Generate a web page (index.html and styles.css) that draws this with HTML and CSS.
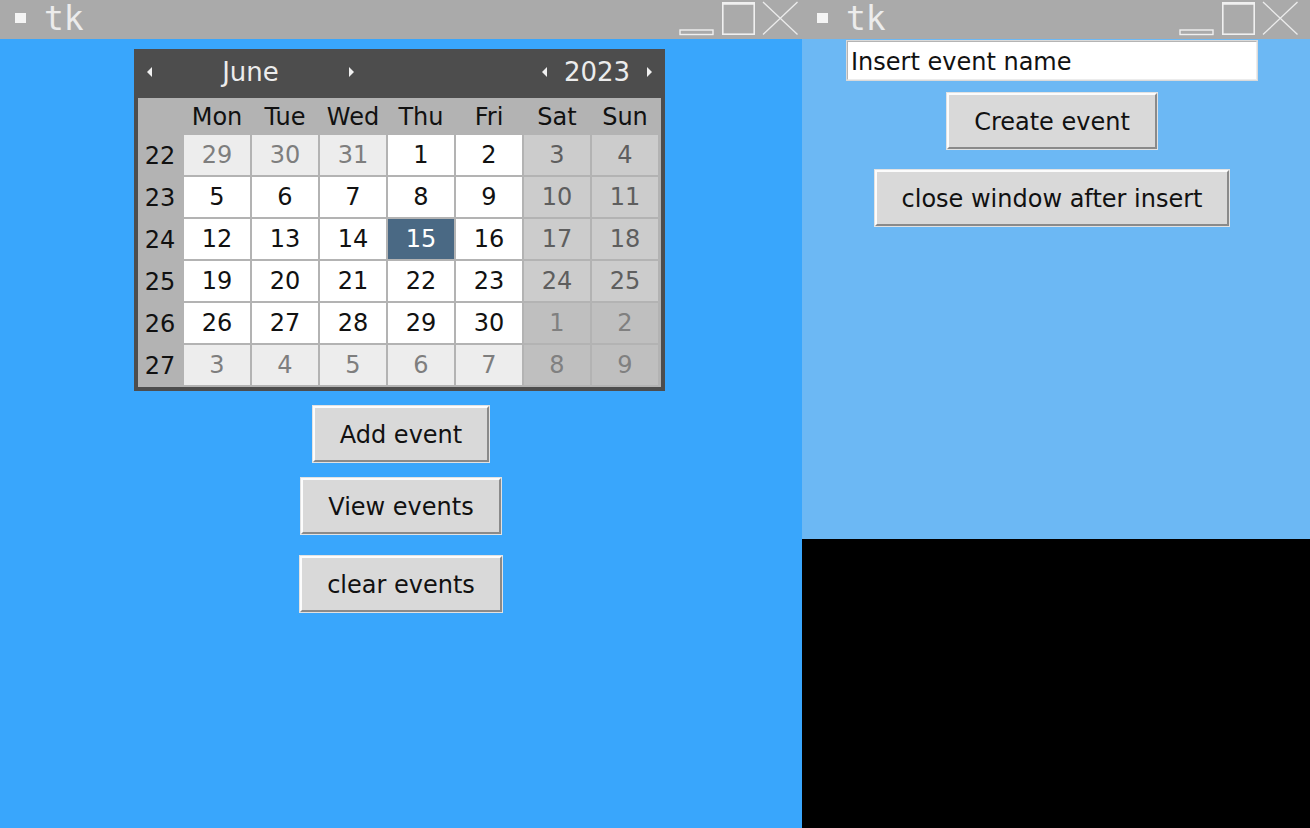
FILE: index.html
```html
<!DOCTYPE html>
<html>
<head>
<meta charset="utf-8">
<title>tk</title>
<link rel="stylesheet" href="styles.css">
</head>
<body>
<div class="screen">
  <div class="win win-main">
    <div class="titlebar">
      <span class="ticon"></span><span class="ttext">tk</span>
      <svg class="controls" width="120" height="39" viewBox="0 0 120 39">
        <rect x="1" y="30" width="33" height="4.5" fill="none" stroke="#f0f0f0" stroke-width="1.4"/>
        <rect x="43.8" y="2.8" width="31.4" height="31.4" fill="none" stroke="#f0f0f0" stroke-width="1.6"/>
        <line x1="43" y1="3.6" x2="76" y2="3.6" stroke="#f0f0f0" stroke-width="2.4"/>
        <line x1="84" y1="2" x2="118.5" y2="34.5" stroke="#ececec" stroke-width="1.3"/>
        <line x1="118.5" y1="2" x2="84" y2="34.5" stroke="#ececec" stroke-width="1.3"/>
      </svg>
    </div>
    <div class="content content-main">
      <div class="cal">
        <div class="cal-head">
          <span class="pad-l"></span>
          <span class="arr arr-l"></span>
          <span class="hlabel month">June</span>
          <span class="arr arr-r"></span>
          <span class="hspace"></span>
          <span class="arr arr-l"></span>
          <span class="hlabel year">2023</span>
          <span class="arr arr-r"></span>
          <span class="pad-r"></span>
        </div>
        <div class="cal-grid">
          <div class="corner"></div>
          <div class="dh">Mon</div><div class="dh">Tue</div><div class="dh">Wed</div><div class="dh">Thu</div><div class="dh">Fri</div><div class="dh">Sat</div><div class="dh">Sun</div>

          <div class="wk">22</div>
          <div class="d om">29</div><div class="d om">30</div><div class="d om">31</div><div class="d">1</div><div class="d">2</div><div class="d we">3</div><div class="d we">4</div>

          <div class="wk">23</div>
          <div class="d">5</div><div class="d">6</div><div class="d">7</div><div class="d">8</div><div class="d">9</div><div class="d we">10</div><div class="d we">11</div>

          <div class="wk">24</div>
          <div class="d">12</div><div class="d">13</div><div class="d">14</div><div class="d sel">15</div><div class="d">16</div><div class="d we">17</div><div class="d we">18</div>

          <div class="wk">25</div>
          <div class="d">19</div><div class="d">20</div><div class="d">21</div><div class="d">22</div><div class="d">23</div><div class="d we">24</div><div class="d we">25</div>

          <div class="wk">26</div>
          <div class="d">26</div><div class="d">27</div><div class="d">28</div><div class="d">29</div><div class="d">30</div><div class="d owe">1</div><div class="d owe">2</div>

          <div class="wk">27</div>
          <div class="d om">3</div><div class="d om">4</div><div class="d om">5</div><div class="d om">6</div><div class="d om">7</div><div class="d owe">8</div><div class="d owe">9</div>
        </div>
      </div>
      <button class="btn btn-add">Add event</button>
      <button class="btn btn-view">View events</button>
      <button class="btn btn-clear">clear events</button>
    </div>
  </div>

  <div class="win win-dialog">
    <div class="titlebar">
      <span class="ticon"></span><span class="ttext">tk</span>
      <svg class="controls" width="120" height="39" viewBox="0 0 120 39">
        <rect x="1" y="30" width="33" height="4.5" fill="none" stroke="#f0f0f0" stroke-width="1.4"/>
        <rect x="43.8" y="2.8" width="31.4" height="31.4" fill="none" stroke="#f0f0f0" stroke-width="1.6"/>
        <line x1="43" y1="3.6" x2="76" y2="3.6" stroke="#f0f0f0" stroke-width="2.4"/>
        <line x1="84" y1="2" x2="118.5" y2="34.5" stroke="#ececec" stroke-width="1.3"/>
        <line x1="118.5" y1="2" x2="84" y2="34.5" stroke="#ececec" stroke-width="1.3"/>
      </svg>
    </div>
    <div class="content content-dlg">
      <div class="entry">Insert event name</div>
      <button class="btn btn-create">Create event</button>
      <button class="btn btn-close">close window after insert</button>
    </div>
  </div>
  <div class="win win-edge">
    <div class="titlebar edge-bar"></div>
    <div class="content edge-content"></div>
  </div>
</div>
</body>
</html>
```

FILE: styles.css
```css
* {
  box-sizing: border-box;
}

html, body {
  margin: 0;
  padding: 0;
}

body {
  width: 1310px;
  height: 828px;
  overflow: hidden;
  background: #000000;
  font-family: "DejaVu Sans", "Liberation Sans", sans-serif;
}

.screen {
  display: flex;
  align-items: flex-start;
  width: 1310px;
  height: 828px;
}

.win {
  display: flex;
  flex-direction: column;
  flex-shrink: 0;
}

.win-main {
  width: 802px;
  height: 828px;
}

.win-dialog {
  width: 500px;
  height: 539px;
}

.win-edge {
  width: 8px;
  height: 539px;
}

.titlebar {
  height: 39px;
  flex-shrink: 0;
  background: #aaaaaa;
  display: flex;
  align-items: flex-start;
}

.ticon {
  width: 11px;
  height: 10px;
  margin: 13px 0 0 15px;
  background: #f4f4f4;
}

.ttext {
  margin-left: 18px;
  font-family: "DejaVu Sans Mono", monospace;
  font-size: 33px;
  line-height: 38px;
  color: #ececec;
}

.controls {
  margin-left: auto;
  margin-right: 3px;
  display: block;
}

.content {
  flex: 1;
  display: flex;
  flex-direction: column;
  align-items: center;
}

.content-main {
  background: #39a6fc;
  padding-top: 10px;
}

.content-dlg {
  background: #6cb8f4;
  padding-top: 2px;
}

.edge-content {
  background: #6cb8f4;
}

/* Calendar */
.cal {
  width: 531px;
  padding: 4px;
  margin-right: 3px;
  background: #4d4d4d;
}

.cal-head {
  height: 45px;
  padding-bottom: 7px;
  display: flex;
  align-items: center;
  color: #ececec;
}

.pad-l,
.pad-r {
  width: 8px;
  flex-shrink: 0;
}

.hspace {
  flex: 1;
}

.arr-l {
  flex-shrink: 0;
  width: 6px;
  height: 0;
  border-right: 5px solid #f0f0f0;
  border-top: 5px solid transparent;
  border-bottom: 5px solid transparent;
  border-left: 1px solid transparent;
}

.arr-r {
  flex-shrink: 0;
  width: 6px;
  height: 0;
  border-left: 5px solid #f0f0f0;
  border-top: 5px solid transparent;
  border-bottom: 5px solid transparent;
  border-right: 1px solid transparent;
}

.hlabel {
  font-size: 26px;
  line-height: 30px;
  text-align: center;
  flex-shrink: 0;
}

.month {
  width: 197px;
}

.year {
  width: 100px;
}

.cal-grid {
  display: grid;
  grid-template-columns: 44px repeat(7, 66px);
  grid-template-rows: 35px repeat(6, 40px);
  gap: 2px;
  padding: 0 3px 2px 0;
  background: #b3b3b3;
  font-size: 24px;
}

.dh {
  padding-top: 3px;
  line-height: 32px;
  text-align: center;
  color: #111111;
}

.wk {
  padding-top: 2px;
  line-height: 38px;
  text-align: center;
  color: #111111;
}

.d {
  padding-top: 1px;
  line-height: 39px;
  text-align: center;
  background: #ffffff;
  color: #111111;
}

.d.om {
  background: #ededed;
  color: #7e7e7e;
}

.d.we {
  background: #cccccc;
  color: #5e5e5e;
}

.d.owe {
  background: #bfbfbf;
  color: #808080;
}

.d.sel {
  background: #4a6984;
  color: #ffffff;
}

/* Buttons */
.btn {
  display: block;
  font-family: "DejaVu Sans", sans-serif;
  font-size: 24px;
  line-height: 28px;
  color: #111111;
  background: #d9d9d9;
  padding: 13px 25px 11px;
  border: 2px solid;
  border-color: #fcfcfc #8a8a8a #8a8a8a #fcfcfc;
  box-shadow: 0 0 0 1px #e2e2e2;
  white-space: nowrap;
  margin: 0;
}

.btn-add {
  margin-top: 15px;
}

.btn-view {
  margin-top: 16px;
}

.btn-clear {
  margin-top: 22px;
}

.entry {
  width: 410px;
  height: 39px;
  padding: 6px 0 3px 3px;
  font-size: 24px;
  line-height: 28px;
  color: #111111;
  background: #ffffff;
  border: 1px solid;
  border-color: #b4b4b4 #ececec #ececec #b4b4b4;
  box-shadow: 0 0 0 1px #dadada;
  white-space: nowrap;
}

.btn-create {
  margin-top: 13px;
}

.btn-close {
  margin-top: 21px;
}
```
